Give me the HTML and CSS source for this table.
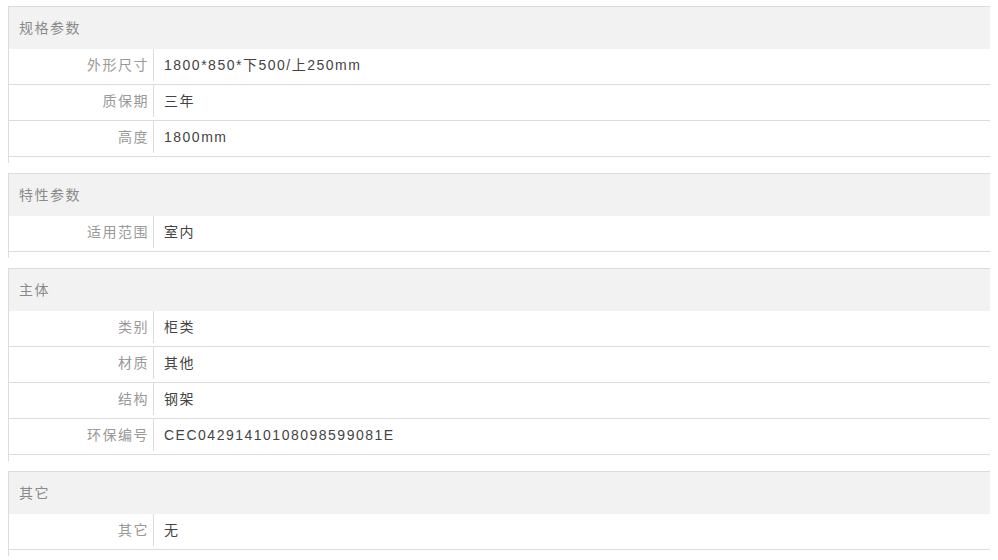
FILE: index.html
```html
<!DOCTYPE html>
<html lang="zh">
<head>
<meta charset="utf-8">
<link rel="stylesheet" href="styles.css">
</head>
<body>
<div class="page">
  <div class="group">
    <div class="group-title">规格参数</div>
    <div class="row"><div class="label">外形尺寸</div><div class="value">1800*850*下500/上250mm</div></div>
    <div class="row"><div class="label">质保期</div><div class="value">三年</div></div>
    <div class="row"><div class="label">高度</div><div class="value">1800mm</div></div>
  </div>
  <div class="group">
    <div class="group-title">特性参数</div>
    <div class="row"><div class="label">适用范围</div><div class="value">室内</div></div>
  </div>
  <div class="group">
    <div class="group-title">主体</div>
    <div class="row"><div class="label">类别</div><div class="value">柜类</div></div>
    <div class="row"><div class="label">材质</div><div class="value">其他</div></div>
    <div class="row"><div class="label">结构</div><div class="value">钢架</div></div>
    <div class="row"><div class="label">环保编号</div><div class="value">CEC04291410108098599081E</div></div>
  </div>
  <div class="group">
    <div class="group-title">其它</div>
    <div class="row"><div class="label">其它</div><div class="value">无</div></div>
  </div>
</div>
</body>
</html>
```

FILE: styles.css
```css
html, body {
  margin: 0;
  padding: 0;
  background: #fff;
}
body {
  font-family: "Liberation Sans", Arial, "Noto Sans CJK SC", sans-serif;
  font-size: 14px;
  letter-spacing: 1.5px;
}
.page {
  padding: 6px 0 0 8px;
  width: 982px;
}
.group {
  border-top: 1px solid #dcdcdc;
  border-left: 1px solid #dcdcdc;
  padding-bottom: 6px;
  margin-bottom: 10px;
}
.group-title {
  height: 42px;
  line-height: 43px;
  background: #f2f2f2;
  color: #8a8a8a;
  padding-left: 10px;
}
.row {
  display: flex;
  height: 35px;
  border-bottom: 1px solid #dcdcdc;
}
.label {
  width: 140px;
  height: 32px;
  line-height: 32px;
  padding-right: 4px;
  text-align: right;
  color: #999;
  border-right: 1px solid #dcdcdc;
}
.value {
  flex: 1;
  line-height: 32px;
  padding-left: 10px;
  color: #444;
}
```
